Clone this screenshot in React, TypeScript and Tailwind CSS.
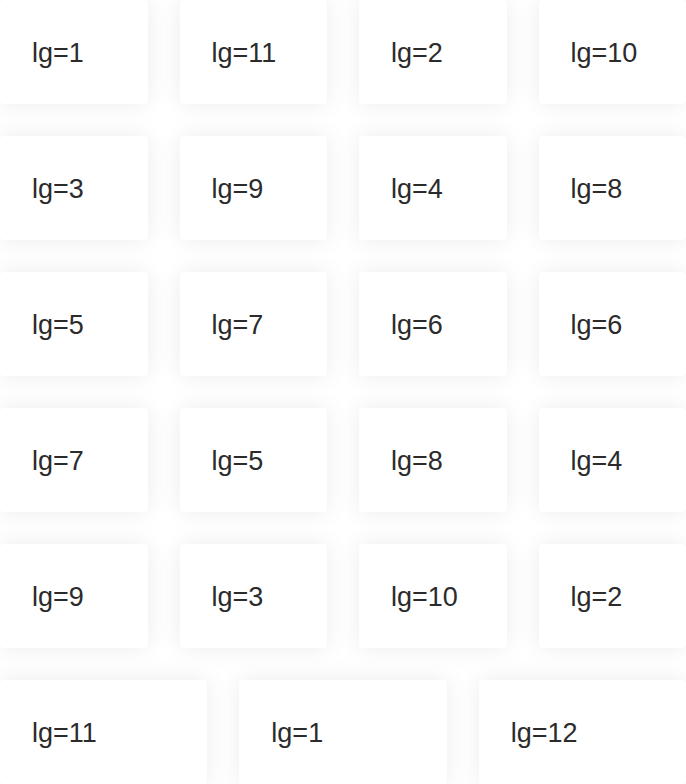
const rows: number[][] = [
  [1, 11, 2, 10],
  [3, 9, 4, 8],
  [5, 7, 6, 6],
  [7, 5, 8, 4],
  [9, 3, 10, 2],
];

function Card({ lg }: { lg: number }) {
  return (
    <div className="h-[104px] flex items-center pl-8 pt-0.5 bg-white rounded shadow-[0_0_24px_rgba(0,0,0,0.08)] text-[27px] text-[#2b2b2b]">
      lg={lg}
    </div>
  );
}

export default function App() {
  return (
    <div className="w-[686px] h-[784px] overflow-hidden bg-white" style={{ fontFamily: '"Liberation Sans", Arial, sans-serif' }}>
      <div className="flex flex-col gap-8">
        {rows.map((r, i) => (
          <div key={i} className="grid grid-cols-4 gap-8">
            {r.map((n, j) => (
              <Card key={j} lg={n} />
            ))}
          </div>
        ))}
        <div className="grid grid-cols-3 gap-8">
          <Card lg={11} />
          <Card lg={1} />
          <Card lg={12} />
        </div>
      </div>
    </div>
  );
}
